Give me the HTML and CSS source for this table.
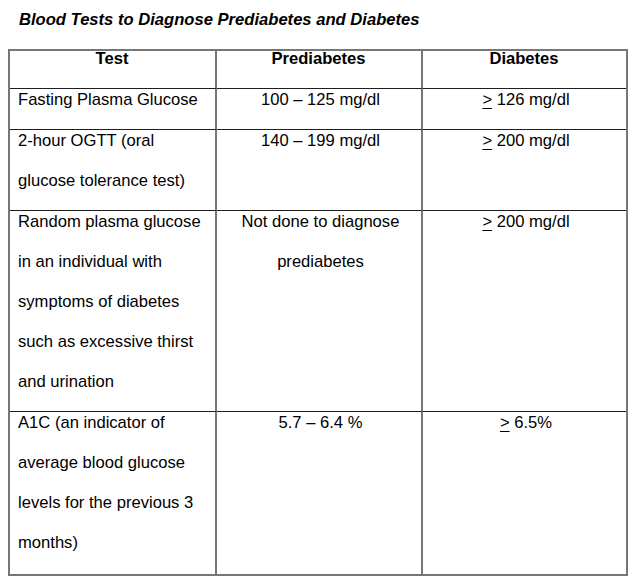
FILE: index.html
```html
<!DOCTYPE html>
<html lang="en">
<head>
<meta charset="utf-8">
<title>Blood Tests to Diagnose Prediabetes and Diabetes</title>
<link rel="stylesheet" href="styles.css">
</head>
<body>
<div class="page">
  <h1 class="title">Blood Tests to Diagnose Prediabetes and Diabetes</h1>
  <table class="tests">
    <colgroup>
      <col class="c1">
      <col class="c2">
      <col class="c3">
    </colgroup>
    <thead>
      <tr>
        <th>Test</th>
        <th>Prediabetes</th>
        <th>Diabetes</th>
      </tr>
    </thead>
    <tbody>
      <tr>
        <td><span class="ln">Fasting Plasma Glucose</span></td>
        <td class="mid"><span class="ln">100 – 125 mg/dl</span></td>
        <td class="mid"><span class="ln"><u>&gt;</u> 126 mg/dl</span></td>
      </tr>
      <tr>
        <td><span class="ln">2-hour OGTT (oral</span><span class="ln">glucose tolerance test)</span></td>
        <td class="mid"><span class="ln">140 – 199 mg/dl</span></td>
        <td class="mid"><span class="ln"><u>&gt;</u> 200 mg/dl</span></td>
      </tr>
      <tr>
        <td><span class="ln">Random plasma glucose</span><span class="ln">in an individual with</span><span class="ln">symptoms of diabetes</span><span class="ln">such as excessive thirst</span><span class="ln">and urination</span></td>
        <td class="mid"><span class="ln">Not done to diagnose</span><span class="ln">prediabetes</span></td>
        <td class="mid"><span class="ln"><u>&gt;</u> 200 mg/dl</span></td>
      </tr>
      <tr>
        <td><span class="ln">A1C (an indicator of</span><span class="ln">average blood glucose</span><span class="ln">levels for the previous 3</span><span class="ln">months)</span></td>
        <td class="mid"><span class="ln">5.7 – 6.4 %</span></td>
        <td class="mid"><span class="ln"><u>&gt;</u> 6.5%</span></td>
      </tr>
    </tbody>
  </table>
</div>
</body>
</html>
```

FILE: styles.css
```css
html, body {
  margin: 0;
  padding: 0;
  background: #ffffff;
}

body {
  font-family: "Liberation Sans", Arial, Helvetica, sans-serif;
  color: #000000;
}

.page {
  padding: 10px 0 0 8px;
}

.title {
  margin: 0 0 20px 11px;
  font-size: 16.6px;
  line-height: 19px;
  font-weight: bold;
  font-style: italic;
}

.tests {
  width: 620px;
  table-layout: fixed;
  border-collapse: separate;
  border-spacing: 0;
  border: 2px solid #767676;
  font-size: 16.6px;
}

.c1 { width: 207px; }
.c2 { width: 206px; }
.c3 { width: 203px; }

.tests th,
.tests td {
  padding: 0 9px 0 8px;
  vertical-align: top;
}

.tests th:not(:last-child),
.tests td:not(:last-child) {
  border-right: 2px solid #767676;
}

.tests th {
  height: 37px;
  font-weight: bold;
  line-height: 16px;
  text-align: center;
  border-bottom: 1px solid #1e1e1e;
}

.tests tbody tr + tr td {
  border-top: 1px solid #1e1e1e;
}

.tests td {
  padding-top: 1px;
}

.tests tbody tr:last-child td {
  padding-bottom: 2px;
}

.tests .mid {
  padding-left: 10px;
  padding-right: 7px;
  text-align: center;
}

.ln {
  display: block;
  height: 40px;
  line-height: 19px;
  white-space: nowrap;
}

.ln:last-child {
  height: 39px;
}

.ln u {
  text-decoration-thickness: 1px;
  text-underline-offset: 3px;
}
```
